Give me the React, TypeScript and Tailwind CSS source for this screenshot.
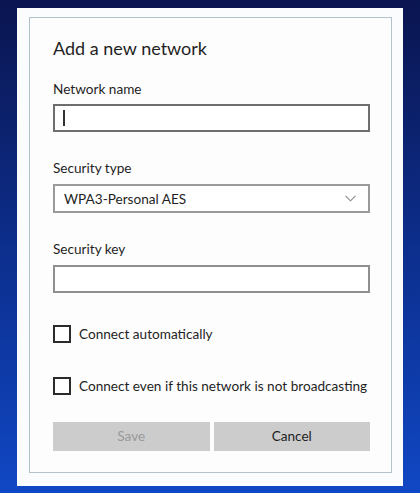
import React from "react";

function Checkbox({ label }: { label: string }) {
  return (
    <div className="flex items-center h-[18px]">
      <div className="w-[18px] h-[18px] border-2 border-[#2b2b2b] bg-white shrink-0" />
      <span className="ml-[8px] text-[13.6px] leading-[18px] text-[#1f1f1f] whitespace-nowrap">{label}</span>
    </div>
  );
}

export default function App() {
  return (
    <div
      className="w-[420px] h-[493px] bg-gradient-to-b from-[#0a1550] via-[#0c2e8c] to-[#1047c4] pt-[8px] pl-[17px] overflow-hidden"
      style={{ fontFamily: 'Lato, "Open Sans", sans-serif' }}
    >
      <div className="w-[386px] h-[478px] bg-[#fbfcfd] pt-[9px] pl-[12px]">
        <div className="w-[363px] h-[456px] border border-[#b3c3ce] bg-[#fdfdfd] pl-[23px] pr-[21px] pt-[18px] flex flex-col">
          <div className="text-[18px] leading-[24px] text-[#1f1f1f] whitespace-nowrap">Add a new network</div>

          <div className="mt-[20px] text-[13.6px] leading-[18px] text-[#1f1f1f]">Network name</div>
          <div className="mt-[6px] h-[28px] border-2 border-[#6e6e6e] bg-white flex items-center pl-[8px]">
            <div className="w-[2px] h-[16px] bg-[#333]" />
          </div>

          <div className="mt-[27px] text-[13.6px] leading-[18px] text-[#1f1f1f]">Security type</div>
          <div className="mt-[7px] h-[29px] border-2 border-[#9a9a9a] bg-white flex items-center justify-between pl-[9px] pr-[12px]">
            <span className="text-[13.6px] leading-[18px] text-[#1f1f1f]">WPA3-Personal AES</span>
            <svg width="11" height="7" viewBox="0 0 11 7" fill="none">
              <path d="M0.5 0.8 L5.5 5.8 L10.5 0.8" stroke="#8a8a8a" strokeWidth="1.1" />
            </svg>
          </div>

          <div className="mt-[27px] text-[13.6px] leading-[18px] text-[#1f1f1f]">Security key</div>
          <div className="mt-[7px] h-[28px] border-2 border-[#8f8f8f] bg-white" />

          <div className="mt-[32px]">
            <Checkbox label="Connect automatically" />
          </div>
          <div className="mt-[34px]">
            <Checkbox label="Connect even if this network is not broadcasting" />
          </div>

          <div className="mt-[27px] flex gap-[4px]">
            <div className="flex-1 h-[29px] bg-[#cccccc] flex items-center justify-center text-[13.6px] text-[#9a9a9a]">
              Save
            </div>
            <div className="flex-1 h-[29px] bg-[#cccccc] flex items-center justify-center text-[13.6px] text-[#1f1f1f]">
              Cancel
            </div>
          </div>
        </div>
      </div>
    </div>
  );
}
